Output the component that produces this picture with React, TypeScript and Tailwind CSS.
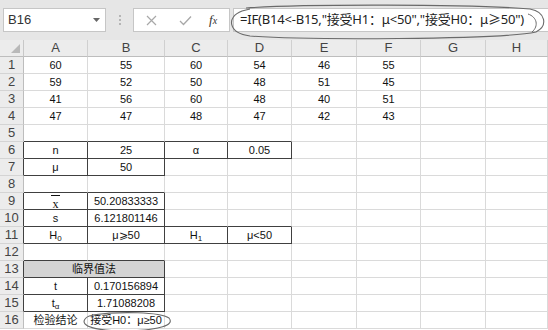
import React from "react";

type Cell = { c?: React.ReactNode; dark?: boolean; span?: number; fill?: boolean; left?: boolean };

const FONT = { fontFamily: '"Liberation Sans", "Noto Sans CJK SC", sans-serif' };

const num = (s: string): Cell => ({ c: s });

const Sub = ({ base, sub }: { base: string; sub: string }) => (
  <span className="inline-flex items-end leading-none">
    <span className="text-[11px]">{base}</span>
    <span className="relative top-[2px] text-[8px]">{sub}</span>
  </span>
);

const rows: Cell[][] = [];
const dataRows = [
  ["60", "55", "60", "54", "46", "55"],
  ["59", "52", "50", "48", "51", "45"],
  ["41", "56", "60", "48", "40", "51"],
  ["47", "47", "48", "47", "42", "43"],
];
for (const d of dataRows) rows.push([...d.map(num), {}, {}]);
rows.push([{}, {}, {}, {}, {}, {}, {}, {}]); // 5
rows.push([
  { c: "n", dark: true },
  { c: "25", dark: true },
  { c: "α", dark: true },
  { c: "0.05", dark: true },
  {}, {}, {}, {},
]); // 6
rows.push([{ c: "μ", dark: true }, { c: "50", dark: true }, {}, {}, {}, {}, {}, {}]); // 7
rows.push([{}, {}, {}, {}, {}, {}, {}, {}]); // 8
rows.push([
  {
    c: (
      <span className="flex flex-col items-center pt-[1px]" style={{ fontFamily: '"Liberation Serif", serif' }}>
        <span className="h-px w-[9px] bg-[#111]" />
        <span className="mt-[3px] text-[12px] leading-[10px]">x</span>
      </span>
    ),
    dark: true,
  },
  { c: "50.20833333", dark: true },
  {}, {}, {}, {}, {}, {},
]); // 9
rows.push([{ c: "s", dark: true }, { c: "6.121801146", dark: true }, {}, {}, {}, {}, {}, {}]); // 10
rows.push([
  { c: <Sub base="H" sub="0" />, dark: true },
  { c: "μ⩾50", dark: true },
  { c: <Sub base="H" sub="1" />, dark: true },
  { c: "μ<50", dark: true },
  {}, {}, {}, {},
]); // 11
rows.push([{}, {}, {}, {}, {}, {}, {}, {}]); // 12
rows.push([
  { c: "临界值法", dark: true, span: 2, fill: true },
  { dark: true },
  {}, {}, {}, {}, {}, {},
]); // 13
rows.push([{ c: "t", dark: true }, { c: "0.170156894", dark: true }, {}, {}, {}, {}, {}, {}]); // 14
rows.push([
  { c: <Sub base="t" sub="α" />, dark: true },
  { c: "1.71088208", dark: true },
  {}, {}, {}, {}, {}, {},
]); // 15
rows.push([{ c: "检验结论" }, { c: "接受H0：μ≥50" }, {}, {}, {}, {}, {}, {}]); // 16

const isDark = (r: number, c: number) => {
  if (r < 0 || r >= rows.length || c < 0 || c >= 8) return false;
  return !!rows[r][c].dark;
};

const cols = ["A", "B", "C", "D", "E", "F", "G", "H"];

export default function App() {
  const cells: React.ReactNode[] = [];
  cells.push(
    <div key="corner" className="relative border-r border-b border-r-[#c8c8c8] border-b-[#bdbdbd] bg-[#ececec]">
      <svg className="absolute right-[3px] bottom-[3px]" width="9" height="9" viewBox="0 0 9 9">
        <polygon points="9,0 9,9 0,9" fill="#b9b9b9" />
      </svg>
    </div>
  );
  cols.forEach((l) =>
    cells.push(
      <div
        key={"h" + l}
        className="flex items-center justify-center border-r border-b border-r-[#d0d0d0] border-b-[#bdbdbd] bg-[#ececec] text-[13px] text-[#444]"
        style={FONT}
      >
        {l}
      </div>
    )
  );
  rows.forEach((row, r) => {
    cells.push(
      <div
        key={"r" + r}
        className={
          "flex items-center justify-center border-b border-r bg-[#ececec] text-[13px] text-[#444] border-b-[#d4d4d4] " +
          (isDark(r, 0) ? "border-r-[#404040]" : "border-r-[#bdbdbd]")
        }
        style={FONT}
      >
        {r + 1}
      </div>
    );
    for (let c = 0; c < 8; c++) {
      const cell = row[c];
      if (c === 1 && row[0].span === 2) continue;
      const span = cell.span === 2;
      const rc = span ? c + 1 : c;
      const darkB = isDark(r, c) || isDark(r + 1, c);
      const darkR = isDark(r, rc) || isDark(r, rc + 1);
      cells.push(
        <div
          key={r + "-" + c}
          className={
            "flex items-center justify-center whitespace-nowrap border-r border-b text-[11px] text-[#111] " +
            (span ? "col-span-2 " : "") +
            (cell.fill ? "bg-[#d4d4d4] " : "bg-white ") +
            (darkB ? "border-b-[#404040] " : "border-b-[#dadada] ") +
            (darkR ? "border-r-[#404040]" : "border-r-[#dadada]")
          }
          style={FONT}
        >
          {cell.c}
        </div>
      );
    }
  });

  return (
    <div className="relative h-[330px] w-[548px] overflow-hidden bg-white" style={FONT}>
      <div className="flex h-[40px] items-center bg-[#e6e6e6]">
        <div className="ml-[3px] flex h-[24px] w-[103px] items-center justify-between border border-[#c6c6c6] bg-white pl-[4px] pr-[5px]">
          <span className="text-[13px] text-[#333]">B16</span>
          <svg width="7" height="4" viewBox="0 0 7 4">
            <polygon points="0,0 7,0 3.5,4" fill="#666" />
          </svg>
        </div>
        <div className="flex w-[27px] flex-col items-center justify-center gap-[2px]">
          <span className="h-[2px] w-[2px] bg-[#b5b5b5]" />
          <span className="h-[2px] w-[2px] bg-[#b5b5b5]" />
          <span className="h-[2px] w-[2px] bg-[#b5b5b5]" />
        </div>
        <div className="flex h-[24px] w-[97px] items-center border border-[#c6c6c6] bg-white">
          <svg className="ml-[12px]" width="11" height="11" viewBox="0 0 11 11">
            <path d="M1 1 L10 10 M10 1 L1 10" stroke="#a8a8a8" strokeWidth="1.2" />
          </svg>
          <svg className="ml-[22px]" width="13" height="11" viewBox="0 0 13 11">
            <path d="M1 6 L4.5 9.5 L12 1.5" stroke="#a8a8a8" strokeWidth="1.3" fill="none" />
          </svg>
          <span
            className="ml-[17px] text-[13px] italic text-[#333]"
            style={{ fontFamily: '"Liberation Serif", serif' }}
          >
            f<span className="text-[10px]">x</span>
          </span>
        </div>
        <div className="ml-[3px] flex h-[24px] flex-1 items-center border border-r-0 border-[#c6c6c6] bg-white pl-[6px]">
          <span
            className="whitespace-nowrap text-[13px] text-[#222]"
            style={{ fontFamily: '"Noto Sans", "Noto Sans CJK SC", sans-serif', letterSpacing: "-0.2px" }}
          >
            =IF(B14&lt;-B15,"接受H1：μ&lt;50","接受H0：μ≥50")
          </span>
        </div>
      </div>
      <div className="grid grid-cols-[24px_64px_77px_63px_64px_65px_64px_65px_62px] auto-rows-[17px]">{cells}</div>
      <svg className="pointer-events-none absolute left-0 top-0" width="548" height="330" viewBox="0 0 548 330">
        <path
          d="M246 8 C 300 4, 470 4, 530 9 C 546 12, 548 26, 536 32 C 500 40, 300 40, 250 36 C 228 33, 226 17, 242 11 L 250 9"
          fill="none"
          stroke="#6a6a6a"
          strokeWidth="1.1"
        />
        <path d="M528 14 C 537 17, 539 26, 532 32" fill="none" stroke="#6a6a6a" strokeWidth="1" />
        <path
          d="M92 315 C 120 311, 160 312, 169 318 C 175 325, 160 330, 127 331 C 95 331, 80 326, 85 319 C 87 316, 92 315, 97 315"
          fill="none"
          stroke="#6a6a6a"
          strokeWidth="1.1"
        />
      </svg>
    </div>
  );
}
